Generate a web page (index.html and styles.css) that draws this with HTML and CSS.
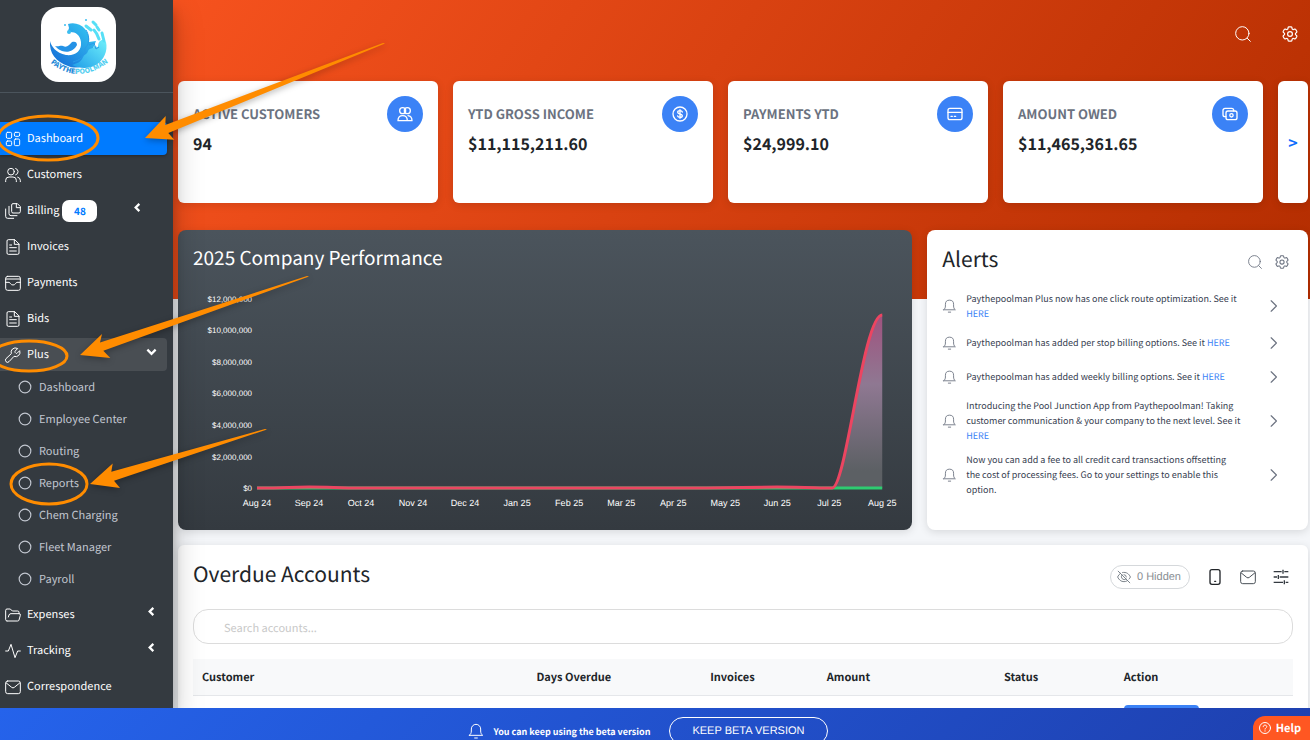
FILE: index.html
```html
<!DOCTYPE html>
<html lang="en">
<head>
    <meta charset="UTF-8">
    <meta name="viewport" content="width=device-width, initial-scale=1.0">
    <title>Paythepoolman</title>
    <link rel="stylesheet" href="styles.css">
</head>
<body>

    <!-- Icon set -->
    <svg class="icon-set" aria-hidden="true">
        <symbol id="i-grid" viewBox="0 0 24 24"><rect x="2" y="2" width="8" height="9" rx="2"/><rect x="14" y="2" width="8" height="6" rx="2"/><rect x="2" y="15" width="8" height="7" rx="2"/><rect x="14" y="12" width="8" height="10" rx="2"/></symbol>
        <symbol id="i-users" viewBox="0 0 24 24"><circle cx="9" cy="7" r="5"/><path d="M1 22v-2a5 5 0 0 1 5-5h6a5 5 0 0 1 5 5v2M16 2.2a5 5 0 0 1 0 9.6M19 15.2a5 5 0 0 1 4 4.8v2"/></symbol>
        <symbol id="i-copy" viewBox="0 0 24 24"><path d="M18 1h-6a2 2 0 0 0-2 2v10a2 2 0 0 0 2 2h9a2 2 0 0 0 2-2V6zM17 1v6h6M6 5v11a3 3 0 0 0 3 3h9M1 9v11a3 3 0 0 0 3 3h9"/></symbol>
        <symbol id="i-file" viewBox="0 0 24 24"><path d="M14 1H5a2 2 0 0 0-2 2v18a2 2 0 0 0 2 2h14a2 2 0 0 0 2-2V8zM14 1v7h7M7 9h3M7 13h10M7 18h10"/></symbol>
        <symbol id="i-pay" viewBox="0 0 24 24"><rect x="1" y="2" width="22" height="21" rx="3"/><path d="M1 6h22M1 11h5c2 0 2 4 6 4s4-4 6-4h5"/></symbol>
        <symbol id="i-wrench" viewBox="0 0 24 24"><path d="M15 6.500a1.200 1.200 0 0 0 0 1.500l1.500 1.500a1.200 1.200 0 0 0 1.500 0l4-4a6.500 6.500 0 0 1-8.500 8.500l-7.500 8a3 3 0 0 1-4.500-4.500l8-7.500A6.500 6.500 0 0 1 18.500 2z"/></symbol>
        <symbol id="i-circle" viewBox="0 0 24 24"><circle cx="12" cy="12" r="10"/></symbol>
        <symbol id="i-folder" viewBox="0 0 24 24"><path d="M3 21a2 2 0 0 1-2-2V5a2 2 0 0 1 2-2h5l3 3h8a2 2 0 0 1 2 2v2M3 21h16a2 2 0 0 0 2-1.500l2-7a2 2 0 0 0-2-2.500H9a3 3 0 0 0-3 2l-1 3"/></symbol>
        <symbol id="i-pulse" viewBox="0 0 24 24"><path d="M1 12h4L9 2l6 20 4-10h4"/></symbol>
        <symbol id="i-mail" viewBox="0 0 24 24"><rect x="1" y="3" width="22" height="19" rx="3"/><path d="M2 6l8 6.500a3 3 0 0 0 4 0L22 6"/></symbol>
        <symbol id="i-search" viewBox="0 0 24 24"><circle cx="11" cy="11" r="10"/><path d="M18.500 18.500L23 23"/></symbol>
        <symbol id="i-gear" viewBox="2 2 20 20"><path d="M9.594 3.940c.09-.542.56-.94 1.110-.94h2.593c.55 0 1.020.398 1.110.94l.213 1.281c.063.374.313.686.645.87.074.04.147.083.22.127.325.196.72.257 1.075.124l1.217-.456a1.125 1.125 0 0 1 1.370.49l1.296 2.247a1.125 1.125 0 0 1-.26 1.431l-1.003.827c-.293.241-.438.613-.43.992a7.723 7.723 0 0 1 0 .255c-.008.378.137.75.43.991l1.004.827c.424.35.534.955.26 1.430l-1.298 2.247a1.125 1.125 0 0 1-1.369.491l-1.217-.456c-.355-.133-.75-.072-1.076.124a6.470 6.470 0 0 1-.22.128c-.331.183-.581.495-.644.869l-.213 1.281c-.09.543-.56.94-1.110.94h-2.594c-.55 0-1.019-.398-1.110-.94l-.213-1.281c-.062-.374-.312-.686-.644-.87a6.520 6.520 0 0 1-.22-.127c-.325-.196-.72-.257-1.076-.124l-1.217.456a1.125 1.125 0 0 1-1.369-.49l-1.297-2.247a1.125 1.125 0 0 1 .26-1.431l1.004-.827c.292-.24.437-.613.43-.991a6.932 6.932 0 0 1 0-.255c.007-.38-.138-.751-.43-.992l-1.004-.827a1.125 1.125 0 0 1-.26-1.430l1.297-2.247a1.125 1.125 0 0 1 1.370-.491l1.216.456c.356.133.751.072 1.076-.124.072-.044.146-.086.22-.128.332-.183.582-.495.644-.869z"/><circle cx="12" cy="12" r="3"/></symbol>
        <symbol id="i-bell" viewBox="0 0 24 24"><path d="M2 18.500h20c-2-1.500-3-3.500-3-6.500V9A7 7 0 0 0 5 9v3c0 3-1 5-3 6.500zM10 22.500h4"/></symbol>
        <symbol id="i-next" viewBox="0 0 24 24"><path d="M8 3l9 9-9 9"/></symbol>
        <symbol id="i-left" viewBox="0 0 24 24"><path d="M16 4l-8 8 8 8"/></symbol>
        <symbol id="i-down" viewBox="0 0 24 24"><path d="M3 8l9 9 9-9"/></symbol>
        <symbol id="i-people" viewBox="0 0 24 24"><circle cx="8.500" cy="7" r="4.500"/><circle cx="15.500" cy="7" r="4.500"/><path d="M1.500 22c0-5 2.500-7.500 7-7.500s7 2.500 7 7.500zM16.500 14.500c3.500.5 6 3 6 7.500h-7"/></symbol>
        <symbol id="i-dollar" viewBox="0 0 24 24"><circle cx="12" cy="12" r="10.500"/><path d="M15.500 9c-.5-1.500-2-2-3.500-2-2 0-3.500.8-3.500 2.500 0 3.500 7 1.500 7 5 0 1.700-1.500 2.500-3.500 2.500-1.500 0-3-.5-3.500-2M12 5.500v13"/></symbol>
        <symbol id="i-card" viewBox="0 0 24 24"><rect x="1.500" y="3.500" width="21" height="17" rx="3"/><path d="M1.500 9.500h21M6 15.500h2M11 15.500h2"/></symbol>
        <symbol id="i-cash" viewBox="0 0 24 24"><rect x="6" y="7.500" width="16.500" height="13" rx="3"/><circle cx="14.200" cy="14" r="2.500"/><path d="M6 16H4.500a3 3 0 0 1-3-3V6.500a3 3 0 0 1 3-3h10a3 3 0 0 1 3 3v1"/></symbol>
        <symbol id="i-hide" viewBox="0 0 24 24"><path d="M2 2l20 20M6 5.500C4 7 2.500 9 1 12c2.500 5 6 8 11 8 2 0 4-.5 5.500-1.500M9.500 4.300C16 3 20.500 6.500 23 12c-.6 1.400-1.400 2.500-2.400 3.600M8.500 8.500a5 5 0 0 0 7 7M12 8a4 4 0 0 1 4 4"/></symbol>
        <symbol id="i-phone" viewBox="0 0 24 24"><rect x="4.500" y="1" width="15" height="22" rx="3"/><path d="M11.500 18.500h1.500"/></symbol>
        <symbol id="i-sliders" viewBox="0 0 24 24"><path d="M1 4h12M17 4h6M1 12h5M10 12h13M1 20h14M19 20h4M15 1v6M8 9v6M17 17v6"/></symbol>
        <symbol id="i-help" viewBox="0 0 24 24"><circle cx="12" cy="12" r="11"/><path d="M8.500 9.500C8.500 7.500 10 6.300 12 6.300s3.500 1.200 3.500 3c0 2.500-3.500 2.500-3.500 5M12 17.500v.8"/></symbol>
    </svg>

    <div class="workspace">

        <nav class="sidebar">
            <a class="brand" href="#" aria-label="Paythepoolman">
                <svg class="logo" viewBox="0 0 75 75">
                    <defs>
                        <linearGradient id="wave" x1="0" y1="1" x2="1" y2="0">
                            <stop offset="0.1" stop-color="#1670d8"/>
                            <stop offset="0.9" stop-color="#35c4f2"/>
                        </linearGradient>
                        <linearGradient id="foam" x1="0" y1="1" x2="1" y2="0">
                            <stop offset="0" stop-color="#1f9de8"/>
                            <stop offset="1" stop-color="#6ff0fb"/>
                        </linearGradient>
                        <linearGradient id="word" x1="0" y1="0" x2="1" y2="0">
                            <stop offset="0.45" stop-color="#1d86d6"/>
                            <stop offset="0.45" stop-color="#4fcdf0"/>
                        </linearGradient>
                    </defs>
                    <path fill="url(#wave)" d="M9 34c1 5 6 12 16 14 9 1 16-4 15-13-1-7-5-10-11-10-2 0-2-2-1-4l-1-4c6-2 13 0 17 5 3 4 5 9 4 13l7-1-8 20c-5 7-13 8-20 5C15 55 8 46 9 34z"/>
                    <path fill="#2492e6" d="M14 39c4 1 5-1 8 0 4 2 6-1 9-4 3-1 5 0 5 3-3 6-9 8-15 6-3-1-5-3-7-5z"/>
                    <path fill="url(#foam)" d="M31 58c6-2 9-3 11-8 1-3 4-2 5-6 2-4 5-1 6-5l4 1c0-7 5-9 8-5 2 9-2 18-10 23-7 4-16 4-24 0z"/>
                    <path fill="none" stroke="#2b9be8" stroke-width="1" d="M45 23c3 5 3 9 2 14-1 3-4 3-3 8-1 5-5 8-12 10M48 38l5-2 2 6 3-2"/>
                    <g fill="none" stroke="#56dff6" stroke-width="3" stroke-linecap="round">
                        <path d="M45 19l5 4M52 15l3 3M61 26l2 8M53 23c3 3 4 6 5 9M56 20l2 3"/>
                    </g>
                    <g fill="#3bbdf0"><circle cx="28" cy="25" r="2"/><circle cx="24" cy="18" r="1"/><circle cx="45" cy="13" r="1"/></g>
                    <path id="arc" fill="none" d="M7 54q30 26 62 0"/>
                    <text class="logo-word" fill="url(#word)"><textPath href="#arc" startOffset="3">PAYTHEPOOLMAN</textPath></text>
                </svg>
            </a>

            <ul class="menu">
                <li><a class="menu-item active" href="#"><svg class="icon"><use href="#i-grid"/></svg>Dashboard</a></li>
                <li><a class="menu-item" href="#"><svg class="icon"><use href="#i-users"/></svg>Customers</a></li>
                <li><a class="menu-item with-badge" href="#"><svg class="icon"><use href="#i-copy"/></svg>Billing<span class="badge">48</span><svg class="caret"><use href="#i-left"/></svg></a></li>
                <li><a class="menu-item" href="#"><svg class="icon"><use href="#i-file"/></svg>Invoices</a></li>
                <li><a class="menu-item" href="#"><svg class="icon"><use href="#i-pay"/></svg>Payments</a></li>
                <li><a class="menu-item" href="#"><svg class="icon"><use href="#i-file"/></svg>Bids</a></li>
                <li>
                    <a class="menu-item open" href="#"><svg class="icon"><use href="#i-wrench"/></svg>Plus<svg class="caret"><use href="#i-down"/></svg></a>
                    <ul class="submenu">
                        <li><a href="#"><svg class="dot"><use href="#i-circle"/></svg>Dashboard</a></li>
                        <li><a href="#"><svg class="dot"><use href="#i-circle"/></svg>Employee Center</a></li>
                        <li><a href="#"><svg class="dot"><use href="#i-circle"/></svg>Routing</a></li>
                        <li><a href="#"><svg class="dot"><use href="#i-circle"/></svg>Reports</a></li>
                        <li><a href="#"><svg class="dot"><use href="#i-circle"/></svg>Chem Charging</a></li>
                        <li><a href="#"><svg class="dot"><use href="#i-circle"/></svg>Fleet Manager</a></li>
                        <li><a href="#"><svg class="dot"><use href="#i-circle"/></svg>Payroll</a></li>
                    </ul>
                </li>
                <li><a class="menu-item" href="#"><svg class="icon"><use href="#i-folder"/></svg>Expenses<svg class="caret"><use href="#i-left"/></svg></a></li>
                <li><a class="menu-item" href="#"><svg class="icon"><use href="#i-pulse"/></svg>Tracking<svg class="caret"><use href="#i-left"/></svg></a></li>
                <li><a class="menu-item" href="#"><svg class="icon"><use href="#i-mail"/></svg>Correspondence</a></li>
            </ul>
        </nav>

        <main class="main">
            <header class="topbar">
                <button class="icon-button" aria-label="Search"><svg class="icon"><use href="#i-search"/></svg></button>
                <button class="icon-button" aria-label="Settings"><svg class="icon"><use href="#i-gear"/></svg></button>
            </header>

            <section class="stats">
                <div class="card stat">
                    <div>
                        <h3>ACTIVE CUSTOMERS</h3>
                        <p>94</p>
                    </div>
                    <span class="stat-icon"><svg class="icon"><use href="#i-people"/></svg></span>
                </div>
                <div class="card stat">
                    <div>
                        <h3>YTD GROSS INCOME</h3>
                        <p>$11,115,211.60</p>
                    </div>
                    <span class="stat-icon"><svg class="icon"><use href="#i-dollar"/></svg></span>
                </div>
                <div class="card stat">
                    <div>
                        <h3>PAYMENTS YTD</h3>
                        <p>$24,999.10</p>
                    </div>
                    <span class="stat-icon"><svg class="icon"><use href="#i-card"/></svg></span>
                </div>
                <div class="card stat">
                    <div>
                        <h3>AMOUNT OWED</h3>
                        <p>$11,465,361.65</p>
                    </div>
                    <span class="stat-icon"><svg class="icon"><use href="#i-cash"/></svg></span>
                </div>
                <button class="card more">&gt;</button>
            </section>

            <section class="panels">
                <div class="card performance">
                    <h2>2025 Company Performance</h2>
                    <svg class="chart" viewBox="0 0 734 246">
                        <defs>
                            <linearGradient id="income" x1="0" y1="0" x2="0" y2="1">
                                <stop offset="0" stop-color="#a0527f"/>
                                <stop offset="0.4" stop-color="#8f7892"/>
                                <stop offset="0.9" stop-color="#5c6064"/>
                            </linearGradient>
                        </defs>
                        <g class="y-labels">
                            <text x="74" y="22">$12,000,000</text>
                            <text x="74" y="53">$10,000,000</text>
                            <text x="74" y="85">$8,000,000</text>
                            <text x="74" y="116">$6,000,000</text>
                            <text x="74" y="148">$4,000,000</text>
                            <text x="74" y="180">$2,000,000</text>
                            <text x="74" y="211">$0</text>
                        </g>
                        <g class="x-labels">
                            <text x="79" y="226">Aug 24</text>
                            <text x="131" y="226">Sep 24</text>
                            <text x="183" y="226">Oct 24</text>
                            <text x="235" y="226">Nov 24</text>
                            <text x="287" y="226">Dec 24</text>
                            <text x="339" y="226">Jan 25</text>
                            <text x="391" y="226">Feb 25</text>
                            <text x="443" y="226">Mar 25</text>
                            <text x="495" y="226">Apr 25</text>
                            <text x="547" y="226">May 25</text>
                            <text x="599" y="226">Jun 25</text>
                            <text x="651" y="226">Jul 25</text>
                            <text x="704" y="226">Aug 25</text>
                        </g>
                        <path fill="url(#income)" d="M654 208C668 207 685 35 704 35V208z"/>
                        <path class="line payments" d="M79 208H704"/>
                        <path class="line gross" d="M79 208C110 208 110 207 131 207S160 208 183 208H495C550 208 570 207 599 207S640 208 654 208C668 207 685 35 704 35"/>
                    </svg>
                </div>

                <div class="card alerts">
                    <div class="alerts-head">
                        <h2>Alerts</h2>
                        <button class="icon-button" aria-label="Search alerts"><svg class="icon"><use href="#i-search"/></svg></button>
                        <button class="icon-button" aria-label="Alert settings"><svg class="icon"><use href="#i-gear"/></svg></button>
                    </div>
                    <ul>
                        <li><svg class="icon"><use href="#i-bell"/></svg><p>Paythepoolman Plus now has one click route optimization. See it <a href="#">HERE</a></p><svg class="icon next"><use href="#i-next"/></svg></li>
                        <li><svg class="icon"><use href="#i-bell"/></svg><p>Paythepoolman has added per stop billing options. See it <a href="#">HERE</a></p><svg class="icon next"><use href="#i-next"/></svg></li>
                        <li><svg class="icon"><use href="#i-bell"/></svg><p>Paythepoolman has added weekly billing options. See it <a href="#">HERE</a></p><svg class="icon next"><use href="#i-next"/></svg></li>
                        <li><svg class="icon"><use href="#i-bell"/></svg><p>Introducing the Pool Junction App from Paythepoolman! Taking<br>customer communication &amp; your company to the next level. See it <a href="#">HERE</a></p><svg class="icon next"><use href="#i-next"/></svg></li>
                        <li><svg class="icon"><use href="#i-bell"/></svg><p>Now you can add a fee to all credit card transactions offsetting<br>the cost of processing fees. Go to your settings to enable this<br>option.</p><svg class="icon next"><use href="#i-next"/></svg></li>
                    </ul>
                </div>
            </section>

            <section class="card overdue">
                <div class="overdue-head">
                    <h2>Overdue Accounts</h2>
                    <button class="hidden-count"><svg class="icon"><use href="#i-hide"/></svg>0 Hidden</button>
                    <button class="icon-button" aria-label="Text"><svg class="icon phone"><use href="#i-phone"/></svg></button>
                    <button class="icon-button" aria-label="Email"><svg class="icon"><use href="#i-mail"/></svg></button>
                    <button class="icon-button" aria-label="Filters"><svg class="icon sliders"><use href="#i-sliders"/></svg></button>
                </div>
                <input class="account-search" type="text" aria-label="Search accounts" placeholder="Search accounts...">
                <table>
                    <thead>
                        <tr>
                            <th class="col-customer">Customer</th>
                            <th class="col-days">Days Overdue</th>
                            <th class="col-invoices">Invoices</th>
                            <th class="col-amount">Amount</th>
                            <th class="col-status">Status</th>
                            <th>Action</th>
                        </tr>
                    </thead>
                    <tbody>
                        <tr>
                            <td></td>
                            <td></td>
                            <td></td>
                            <td></td>
                            <td></td>
                            <td><button class="row-action"></button></td>
                        </tr>
                    </tbody>
                </table>
            </section>
        </main>
    </div>

    <footer class="beta-bar">
        <svg class="icon"><use href="#i-bell"/></svg>
        <span>You can keep using the beta version</span>
        <button class="keep-beta">KEEP BETA VERSION</button>
    </footer>

    <button class="help"><svg class="icon"><use href="#i-help"/></svg>Help</button>

    <!-- Walkthrough arrows and circles -->
    <svg class="markup" aria-hidden="true">
        <g class="rings">
            <ellipse cx="48" cy="138" rx="50" ry="22"/>
            <ellipse cx="29" cy="356" rx="38" ry="15"/>
            <ellipse cx="49" cy="484" rx="38" ry="20"/>
        </g>
        <g class="arrows">
            <path d="M145 138L165.700 116 165.300 125 383 43 385 43.500 168.300 133 174.300 139.700z"/>
            <path d="M80 355L102 334 100 342.500 307 276 309 276.500 103.300 350.700 110.300 358z"/>
            <path d="M90 484L112.700 463.500 111.300 471.700 265 429 267 429.500 114 480.700 120 488z"/>
        </g>
    </svg>

</body>
</html>
```
FILE: styles.css
```css
* {
    box-sizing: border-box;
}
body {
    margin: 0;
    height: 100vh;
    display: grid;
    grid-template-rows: minmax(0, 1fr) 32px;
    overflow: hidden;
    font-family: "Noto Sans CJK SC", "Noto Sans", sans-serif;
    font-size: 11px;
    line-height: 15px;
    color: #212529;
    background-color: #f4f6f9;
    text-rendering: geometricPrecision;
}
h2, h3, p, ul {
    margin: 0;
    padding: 0;
}
h2 {
    font-size: 21px;
    line-height: 26px;
    font-weight: normal;
}
ul {
    list-style: none;
}
a {
    color: #3b82f6;
    text-decoration: none;
}
button {
    padding: 0;
    border: none;
    background: none;
    font-family: inherit;
    color: inherit;
    text-rendering: inherit;
    cursor: pointer;
}
.icon-set {
    position: absolute;
    width: 0;
    height: 0;
}
.icon {
    flex: none;
    display: block;
    width: 16px;
    height: 16px;
    fill: none;
    stroke: currentColor;
    stroke-width: 1.5;
    stroke-linecap: round;
    stroke-linejoin: round;
}
.workspace {
    display: grid;
    grid-template-columns: 173px minmax(0, 1fr);
    overflow: hidden;
}

/* Sidebar */
.sidebar {
    position: relative;
    z-index: 1;
    background-color: #343a40;
    box-shadow: 0 14px 28px rgba(0, 0, 0, 0.25), 0 10px 10px rgba(0, 0, 0, 0.22);
}
.brand {
    display: block;
    padding: 7px 41px 10px;
    border-bottom: 1px solid #4b545c;
}
.logo {
    display: block;
    width: 75px;
    height: 75px;
    border-radius: 18px;
    background-color: #fff;
}
.logo-word {
    font-size: 7px;
    font-weight: 900;
}
.menu {
    padding: 29px 6px 0 0;
}
.menu > li {
    margin-bottom: 3px;
}
.menu-item {
    display: flex;
    align-items: center;
    gap: 6px;
    height: 33px;
    padding: 0 10px 0 5px;
    border-radius: 0 4px 4px 0;
    color: #fff;
}
.menu-item.active {
    background-color: #007bff;
    box-shadow: 0 1px 3px rgba(0, 0, 0, 0.3);
}
.menu-item.open {
    background-color: #494e53;
}
.menu-item.with-badge {
    gap: 3px;
    padding-right: 24px;
}
.with-badge .icon {
    margin-right: 3px;
}
.badge {
    width: 35px;
    border-radius: 7px;
    background-color: #fff;
    color: #007bff;
    font-size: 10px;
    line-height: 22px;
    font-weight: bold;
    text-align: center;
}
.caret {
    width: 11px;
    height: 11px;
    margin: 0 0 6px auto;
    fill: none;
    stroke: #fff;
    stroke-width: 5;
}
.submenu a {
    display: flex;
    align-items: center;
    gap: 7px;
    height: 32px;
    padding-left: 18px;
    color: #c2c7d0;
}
.dot {
    width: 14px;
    height: 14px;
    fill: none;
    stroke: currentColor;
    stroke-width: 2;
}

/* Main area */
.main {
    padding: 0 2px 0 5px;
    overflow: hidden;
    background: linear-gradient(125deg, #ff5722, #b32d00) right top no-repeat;
    background-size: calc(100% + 173px) 299px;
}
.card {
    border-radius: 6px;
    background-color: #fff;
    box-shadow: 0 2px 8px rgba(0, 0, 0, 0.12);
}
.topbar {
    display: flex;
    justify-content: flex-end;
    align-items: center;
    gap: 31px;
    height: 81px;
    padding: 0 10px 13px;
    color: #fff;
}
.stats {
    display: grid;
    grid-template-columns: repeat(4, 1fr) 30px;
    gap: 15px;
}
.stat {
    display: flex;
    justify-content: space-between;
    height: 122px;
    padding: 15px;
}
.stat h3 {
    margin-top: 8px;
    color: #6b7280;
    font-size: 13px;
    line-height: 20px;
    font-weight: bold;
}
.stat p {
    margin-top: 8px;
    font-size: 16px;
    line-height: 22px;
    font-weight: bold;
}
.stat-icon {
    display: flex;
    align-items: center;
    justify-content: center;
    width: 36px;
    height: 36px;
    border-radius: 50%;
    background-color: #3b82f6;
    color: #fff;
}
.stat-icon .icon {
    stroke-width: 2;
}
.more {
    color: #0d6efd;
    font-size: 16px;
    font-weight: bold;
}
.panels {
    display: grid;
    grid-template-columns: minmax(0, 27fr) minmax(0, 14fr);
    gap: 15px;
    margin: 27px 0 15px;
}
.performance {
    height: 300px;
    border-radius: 8px;
    background: linear-gradient(#4b545c, #343a40);
    color: #fff;
}
.performance h2 {
    padding: 15px 15px 9px;
    font-size: 19px;
}
.chart {
    display: block;
    width: 100%;
    fill: #fff;
    font-family: "Liberation Sans", Arial, sans-serif;
    font-size: 9px;
}
.y-labels {
    font-size: 8px;
    text-anchor: end;
}
.x-labels {
    text-anchor: middle;
}
.line {
    fill: none;
    stroke-width: 3;
}
.payments {
    stroke: #2ecc71;
}
.gross {
    stroke: #ec4561;
}
.alerts {
    padding: 15px;
    border-radius: 8px;
}
.alerts-head {
    display: flex;
    align-items: center;
    gap: 13px;
    margin-bottom: 13px;
    padding-right: 4px;
}
.alerts-head h2 {
    margin-right: auto;
    line-height: 28px;
}
.alerts-head .icon-button {
    padding-top: 6px;
    color: #6b7280;
}
.alerts-head .icon {
    width: 14px;
    height: 14px;
}
.alerts li {
    display: flex;
    align-items: center;
    gap: 9px;
    min-height: 34px;
    padding: 5px 12px 4px 0;
    color: #374151;
    font-size: 9px;
}
.alerts li p {
    flex: 1;
    padding-right: 8px;
}
.alerts li .icon {
    width: 15px;
    height: 14px;
    color: #6b7280;
}
.alerts li .next {
    stroke-width: 2;
}

/* Overdue accounts */
.overdue {
    padding: 15px;
}
.overdue-head {
    display: flex;
    align-items: center;
    gap: 17px;
    margin-bottom: 20px;
    padding-right: 4px;
}
.overdue-head h2 {
    margin: 0 auto 2px 0;
}
.overdue-head .icon-button {
    padding-top: 5px;
    color: #495057;
}
.overdue-head .phone {
    color: #212529;
    stroke-width: 2;
}
.overdue-head .sliders {
    color: #343a40;
    stroke-width: 2;
    stroke-linecap: butt;
}
.overdue-head .hidden-count {
    display: flex;
    align-items: center;
    gap: 6px;
    height: 24px;
    margin-top: 5px;
    padding: 0 8px 0 6px;
    border: 1px solid #d5d8db;
    border-radius: 12px;
    color: #8a8f94;
    font-family: "Liberation Sans", Arial, sans-serif;
    font-size: 11px;
}
.hidden-count .icon {
    width: 14px;
    height: 14px;
    color: #6c757d;
}
.account-search {
    display: block;
    width: 100%;
    height: 35px;
    margin-bottom: 15px;
    padding: 2px 30px 0;
    border: 1px solid #dcdcdc;
    border-radius: 15px;
    font-family: inherit;
    font-size: 11px;
    text-rendering: inherit;
}
.account-search::placeholder {
    color: #c8c8c8;
}
table {
    width: 100%;
    table-layout: fixed;
    border-collapse: collapse;
}
th {
    height: 36px;
    padding: 2px 9px 0;
    border-bottom: 1px solid #e5e7ea;
    background-color: #f8f9fa;
    font-weight: bold;
    text-align: left;
}
td {
    padding: 9px;
}
.col-customer {
    width: 30.4%;
}
.col-days {
    width: 15.8%;
}
.col-invoices {
    width: 10.6%;
}
.col-amount {
    width: 16.1%;
}
.col-status {
    width: 10.9%;
}
.row-action {
    width: 75px;
    height: 28px;
    border-radius: 4px;
    background-color: #3b82f6;
}

/* Beta bar */
.beta-bar {
    position: relative;
    z-index: 2;
    display: flex;
    align-items: center;
    justify-content: center;
    height: 46px;
    padding-right: 14px;
    background: linear-gradient(135deg, #2563eb, #1e40af);
    color: #fff;
    font-size: 9px;
    font-weight: bold;
}
.beta-bar span {
    margin: 0 19px 0 9px;
}
.keep-beta {
    height: 28px;
    padding: 0 22px;
    border: 1px solid #fff;
    border-radius: 14px;
    font-family: "Liberation Sans", Arial, sans-serif;
    font-size: 11px;
}
.help {
    position: fixed;
    right: 0;
    bottom: 0;
    z-index: 3;
    display: flex;
    align-items: center;
    gap: 5px;
    height: 24px;
    padding: 0 9px 0 6px;
    border-radius: 12px 0 0 0;
    background-color: #ff5722;
    color: #fff;
    font-size: 11px;
    font-weight: bold;
}
.help .icon {
    width: 12px;
    height: 12px;
    stroke-width: 2;
}

/* Walkthrough markup */
.markup {
    position: absolute;
    top: 0;
    left: 0;
    z-index: 4;
    width: 400px;
    height: 520px;
    pointer-events: none;
}
.rings {
    fill: none;
    stroke: #ff8c00;
    stroke-width: 3;
}
.arrows {
    fill: #ff8c00;
    filter: drop-shadow(0 2px 3px rgba(0, 0, 0, 0.3));
}
```
